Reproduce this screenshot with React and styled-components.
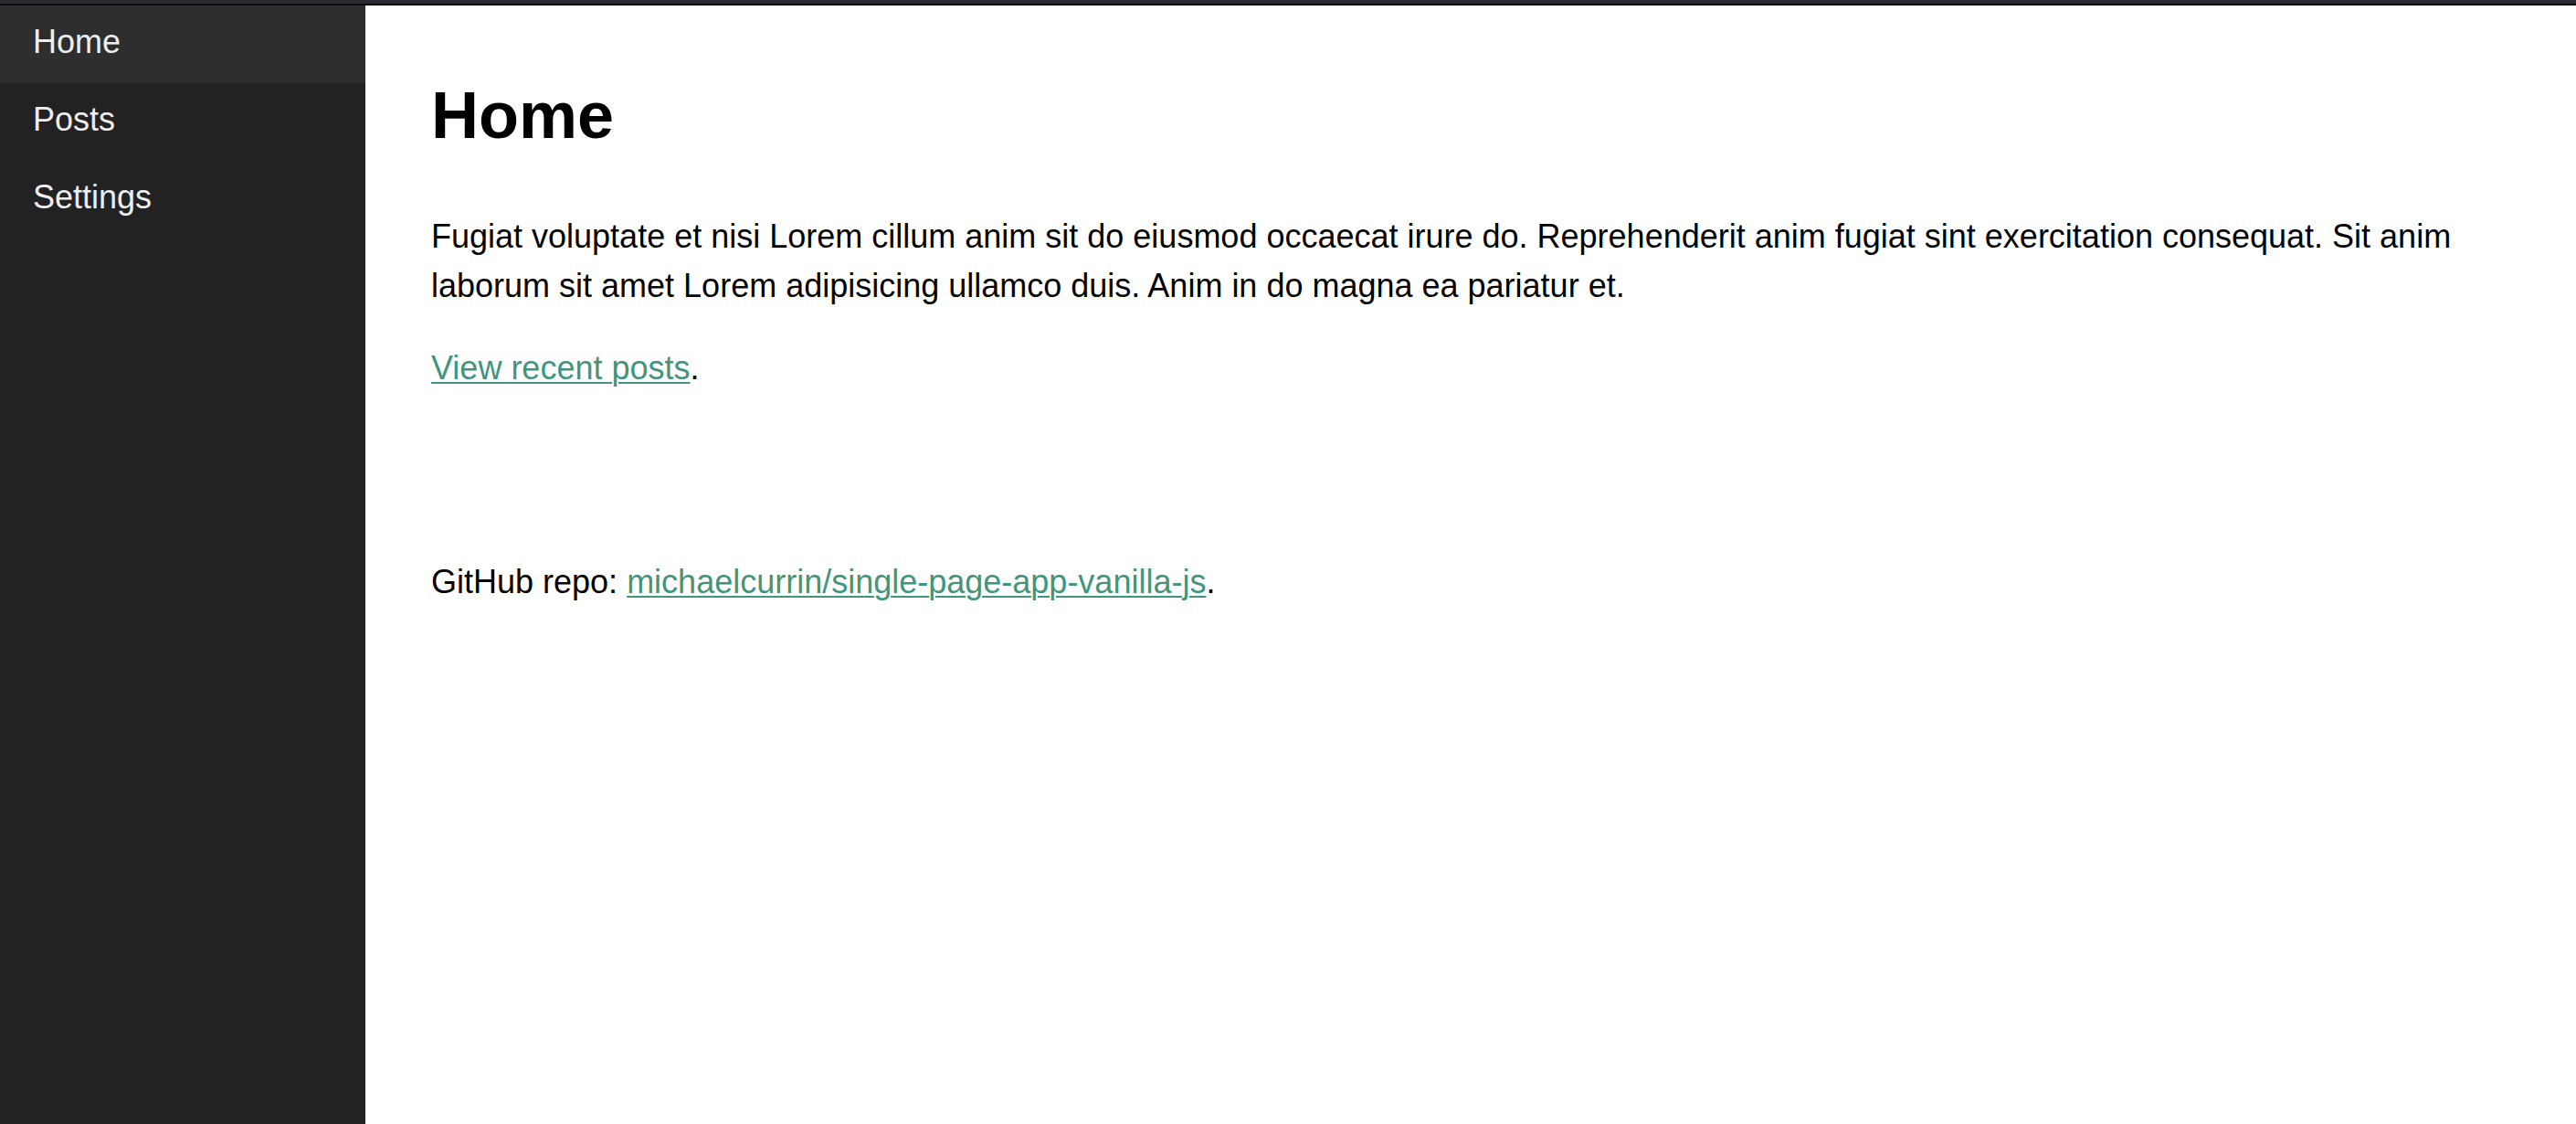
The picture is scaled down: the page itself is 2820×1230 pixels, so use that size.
import React from "react";
import styled, { createGlobalStyle } from "styled-components";

const GlobalStyle = createGlobalStyle`
  *, *::before, *::after { box-sizing: border-box; }
  body {
    margin: 0;
    background: #fff;
    color: #000;
    font-family: Helvetica, "Liberation Sans", Arial, sans-serif;
    font-size: 36px;
    line-height: 54px;
  }
`;

const Page = styled.div`
  display: flex;
  flex-direction: column;
  min-height: 100vh;
`;

const TopBar = styled.div`
  height: 6px;
  background: #2b2a33;
  border-bottom: 2px solid #0c0c0d;
`;

const Body = styled.div`
  display: flex;
  flex: 1;
`;

const Sidebar = styled.nav`
  flex: 0 0 400px;
  display: flex;
  flex-direction: column;
  background: #222;
`;

const NavLink = styled.a`
  padding: 19px 36px 25px;
  line-height: 41px;
  color: #eee;
  text-decoration: none;
  background: ${({ $active }) => ($active ? "#2e2e2e" : "transparent")};
`;

const Main = styled.main`
  flex: 1;
  min-width: 0;
  padding: 66px 72px;
`;

const Title = styled.h1`
  margin: 0 0 52px;
  font-size: 72px;
  line-height: 108px;
`;

const Paragraph = styled.p`
  margin: 0 0 36px;
`;

const Footer = styled.footer`
  margin-top: 180px;
`;

const TextLink = styled.a`
  color: #42957d;
  text-decoration: underline;
  text-decoration-thickness: 2px;
  text-underline-offset: 3px;
`;

const links = ["Home", "Posts", "Settings"];

export default function App() {
  return (
    <>
      <GlobalStyle />
      <Page>
        <TopBar />
        <Body>
          <Sidebar>
            {links.map((label, i) => (
              <NavLink key={label} href={`#${label.toLowerCase()}`} $active={i === 0}>
                {label}
              </NavLink>
            ))}
          </Sidebar>
          <Main>
            <Title>Home</Title>
            <Paragraph>
              Fugiat voluptate et nisi Lorem cillum anim sit do eiusmod occaecat irure do.
              Reprehenderit anim fugiat sint exercitation consequat. Sit anim laborum sit amet
              Lorem adipisicing ullamco duis. Anim in do magna ea pariatur et.
            </Paragraph>
            <Paragraph>
              <TextLink href="#posts">View recent posts</TextLink>.
            </Paragraph>
            <Footer>
              GitHub repo:{" "}
              <TextLink href="https://github.com/michaelcurrin/single-page-app-vanilla-js">
                michaelcurrin/single-page-app-vanilla-js
              </TextLink>
              .
            </Footer>
          </Main>
        </Body>
      </Page>
    </>
  );
}
